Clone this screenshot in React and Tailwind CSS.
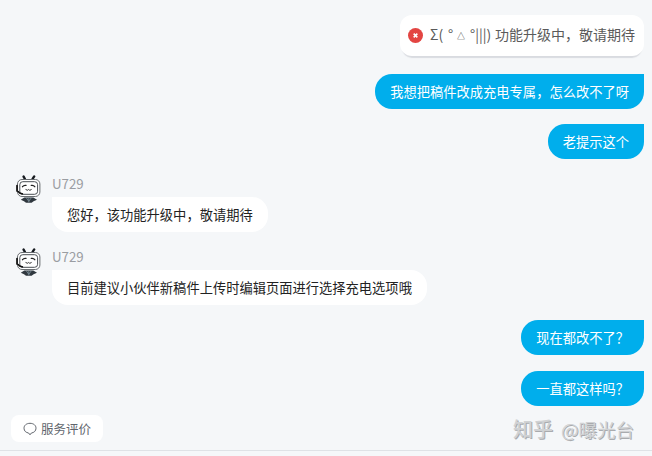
const messages = [
  { id: 1, from: 'me', text: '我想把稿件改成充电专属，怎么改不了呀', className: 'mt-[18px]' },
  { id: 2, from: 'me', text: '老提示这个', className: 'mt-[15px]' },
  { id: 3, from: 'agent', name: 'U729', text: '您好，该功能升级中，敬请期待', className: 'mt-[15px]' },
  { id: 4, from: 'agent', name: 'U729', text: '目前建议小伙伴新稿件上传时编辑页面进行选择充电选项哦', className: 'mt-[15px]' },
  { id: 5, from: 'me', text: '现在都改不了？', className: 'mt-[15px]' },
  { id: 6, from: 'me', text: '一直都这样吗？', className: 'mt-4' },
]

function Avatar() {
  return (
    <svg viewBox="0 0 28 30" className="mt-px h-[30px] w-7 shrink-0" fill="none">
      <path d="M8.600 1.600l1.200 2.200M19.200 1.400l-1.600 2.400" stroke="#161a1f" strokeWidth="2.400" strokeLinecap="round" />
      <rect x="2.500" y="4.500" width="22.400" height="17" rx="4.500" fill="#fff" stroke="#6a6e72" strokeWidth="1" />
      <rect x="4.800" y="6.700" width="17.800" height="12.600" rx="3" stroke="#4a4f54" strokeWidth="1" />
      <path d="M2 10.500v5.500M3.300 16.700c.8 1.600 2.200 2 4 2.200" stroke="#111" strokeWidth="1.700" strokeLinecap="round" />
      <path d="M7.500 11.700c1-1.300 2.200-1.600 3.500-1.300M16.300 10.400c1.300-.3 2.500 0 3.500 1.300" stroke="#222" strokeWidth="1.300" strokeLinecap="round" />
      <path d="M10.800 14.300c.6 1.300 2 1.300 2.800.2.800 1.100 2.200 1.100 2.800-.2" stroke="#333" strokeWidth="1" strokeLinecap="round" />
      <path d="M5.800 24.800l3.500-2.300h9l3.700 2.300-3.400 1.500-2 1.500H11l-2-1.500z" fill="#30383f" />
      <path d="M11.300 22.800l2.500 3.500 2.500-3.500M13.800 22.500v4.800" stroke="#7d929c" strokeWidth=".8" />
    </svg>
  )
}

function Toast() {
  return (
    <div className="flex h-[41px] w-[244px] items-center self-end rounded-xl bg-white pb-px pl-2 text-[14px] text-[#5a5a5a] shadow-[0_4px_1px_-2px_#d9dbe0]">
      <svg viewBox="0 0 14 14" className="size-[15px] shrink-0">
        <circle cx="7" cy="7" r="7" fill="#e34542" />
        <path d="M5.300 5.300l3.400 3.400M8.700 5.300L5.300 8.700" stroke="#fff" strokeWidth="1.500" />
      </svg>
      <span className="-mt-0.5 ml-[7px] flex w-[65px] items-center whitespace-pre">
        <span className="w-[18px]">Σ( </span>
        <span className="w-[9px]">°</span>
        <span className="w-[13px] pt-1 text-[8px] text-[#333]">△</span>
        <span>°|||)</span>
      </span>
      <span className="-mt-0.5">功能升级中，敬请期待</span>
    </div>
  )
}

function Message({ message }) {
  if (message.from === 'me') {
    return (
      <div
        className={`${message.className} flex h-[35px] items-center self-end rounded-[17px] rounded-tr-none bg-[#00aeec] px-[15px] text-white`}
      >
        {message.text}
      </div>
    )
  }
  return (
    <div className={`${message.className} flex h-[58px] pl-[15px]`}>
      <Avatar />
      <div className="ml-[9px] flex flex-col items-start">
        <div className="h-[23px] pt-px leading-[18px] text-[#9a9da2]">{message.name}</div>
        <div className="flex h-[35px] items-center rounded-[16px] rounded-tl-none bg-white px-[15px] text-[#222]">
          {message.text}
        </div>
      </div>
    </div>
  )
}

export default function App() {
  return (
    <div className="relative flex h-[456px] w-[652px] flex-col overflow-hidden bg-[#f5f7f9] font-['Noto_Sans_CJK_SC',sans-serif] text-[13.28px] leading-5 whitespace-nowrap">
      <div className="flex h-[450px] shrink-0 flex-col pt-[15px] pr-2">
        <Toast />
        {messages.map((message) => (
          <Message key={message.id} message={message} />
        ))}
        <button className="mt-[9px] ml-[11px] flex h-[27px] w-[92px] shrink-0 items-center rounded-lg bg-white pl-3 text-[12.5px] text-[#61666d]">
          <svg viewBox="0 0 14 14" className="mr-1 size-3.5" fill="none" stroke="#61666d">
            <path
              d="M7 1.300c3.500 0 6 2 6 4.900 0 2.700-2 4.500-4.600 4.800L7 12.800 5.600 11C3 10.700 1 8.900 1 6.200c0-2.900 2.500-4.900 6-4.900z"
              strokeLinejoin="round"
            />
          </svg>
          服务评价
        </button>
      </div>
      <div className="h-1.5 border-t border-[#dfe2e6]" />
      <div className="absolute top-[417px] left-[513px] flex gap-2 text-[#d0d2d4] [text-shadow:1px_1px_0_#a9abae]">
        <span className="text-[20px] leading-6 font-medium">知乎</span>
        <span className="text-[18.5px] leading-6">@曝光台</span>
      </div>
    </div>
  )
}
